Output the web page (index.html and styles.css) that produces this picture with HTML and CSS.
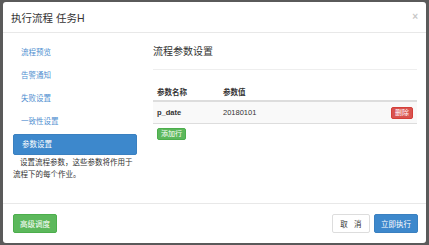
FILE: index.html
```html
<!DOCTYPE html>
<html lang="zh">
<head>
  <meta charset="UTF-8" />
  <title>执行流程</title>
  <link rel="stylesheet" href="styles.css">
</head>
<body>

  <div class="modal">
    <div class="modal-header">
      <h4>执行流程 任务H</h4>
      <span class="close">×</span>
    </div>

    <div class="modal-body">
      <div class="side">
        <ul class="nav">
          <li><a href="#">流程预览</a></li>
          <li><a href="#">告警通知</a></li>
          <li><a href="#">失败设置</a></li>
          <li><a href="#">一致性设置</a></li>
          <li class="active"><a href="#">参数设置</a></li>
        </ul>
        <p class="tip">设置流程参数，这些参数将作用于流程下的每个作业。</p>
      </div>

      <div class="panel">
        <h3>流程参数设置</h3>
        <table class="params">
          <thead>
            <tr><th class="col-name">参数名称</th><th>参数值</th><th></th></tr>
          </thead>
          <tbody>
            <tr>
              <td class="col-name"><b>p_date</b></td>
              <td>20180101</td>
              <td class="ops"><button class="btn btn-xs btn-danger">删除</button></td>
            </tr>
          </tbody>
        </table>
        <button class="btn btn-xs btn-success">添加行</button>
      </div>
    </div>

    <div class="modal-footer">
      <button class="btn btn-success">高级调度</button>
      <div class="right">
        <button class="btn btn-default">取&nbsp;&nbsp;&nbsp;消</button>
        <button class="btn btn-primary">立即执行</button>
      </div>
    </div>
  </div>

</body>
</html>
```

FILE: styles.css
```css
body {
  margin: 0;
  background: #5a5a5a;
  font-family: "Liberation Sans", "Noto Sans CJK SC", sans-serif;
  font-size: 7.5px;
  color: #333;
}

.modal {
  margin: 2px 3px 0 3px;
  width: 423px;
  height: 241px;
  background: #fff;
  border-radius: 3px;
  display: flex;
  flex-direction: column;
}

.modal-header {
  height: 30px;
  border-bottom: 1px solid #e8e8e8;
  display: flex;
  align-items: center;
  justify-content: space-between;
  padding: 0 8px 0 8px;
}

.modal-header h4 {
  margin: 0;
  font-size: 10.5px;
  font-weight: normal;
  color: #333;
}

.close {
  color: #c8c8c8;
  font-size: 10px;
  font-weight: bold;
  margin-top: -2px;
}

.modal-body {
  flex: 1;
  display: flex;
  padding: 9px 9px 0 10px;
}

.side {
  width: 124px;
}

.nav {
  list-style: none;
  margin: 0;
  padding: 0;
}

.nav li {
  height: 21px;
  margin-bottom: 2px;
  border-radius: 2px;
}

.nav a {
  display: block;
  line-height: 21px;
  padding-left: 8px;
  color: #4f8fd0;
  text-decoration: none;
}

.nav .active {
  background: #3d88cc;
  border: 1px solid #3a80c0;
  height: 19px;
}

.nav .active a {
  color: #fff;
  line-height: 19px;
}

.tip {
  margin: 0;
  text-indent: 7px;
  line-height: 12px;
  color: #333;
}

.panel {
  flex: 1;
  margin-left: 16px;
}

.panel h3 {
  margin: 4px 0 0 0;
  font-size: 10px;
  font-weight: normal;
  height: 23px;
  border-bottom: 1px solid #eee;
  line-height: 12px;
}

.params {
  width: 100%;
  margin-top: 12px;
  border-collapse: collapse;
}

.params th {
  text-align: left;
  font-weight: bold;
  height: 18px;
  padding: 0 0 0 4px;
  border-bottom: 2px solid #ddd;
}

.params td {
  height: 21px;
  padding: 0 0 0 4px;
  background: #f9f9f9;
  border-bottom: 1px solid #ddd;
}

.params .col-name {
  width: 62px;
}

.params .ops {
  text-align: right;
  padding-right: 4px;
}

.btn {
  font-family: inherit;
  font-size: 7.5px;
  border: 1px solid transparent;
  border-radius: 2px;
  color: #fff;
  cursor: pointer;
  padding: 0 7px;
  height: 19px;
}

.btn-xs {
  height: 12px;
  padding: 0 3px;
  line-height: 10px;
  margin: 0;
  font-size: 7px;
}

.panel > .btn-xs {
  margin: 4px 0 0 4px;
}

.btn-danger {
  background: #d9534f;
  border-color: #d43f3a;
}

.btn-success {
  background: #5cb85c;
  border-color: #4cae4c;
}

.btn-primary {
  background: #3d88cc;
  border-color: #3a80c0;
}

.btn-default {
  background: #fff;
  border-color: #ddd;
  color: #333;
}

.modal-footer {
  height: 39px;
  border-top: 1px solid #e8e8e8;
  display: flex;
  align-items: center;
  justify-content: space-between;
  padding: 0 8px 0 10px;
}

.modal-footer .btn {
  width: 44px;
  padding: 0;
}

.modal-footer .btn-default {
  width: 38px;
  margin-right: 2px;
}
```
